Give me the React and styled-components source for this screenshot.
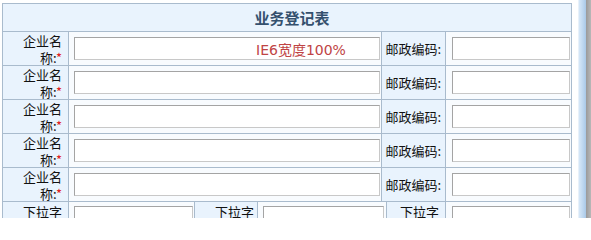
import styled, { createGlobalStyle } from 'styled-components';

const GlobalStyle = createGlobalStyle`
  html, body {
    margin: 0;
    padding: 0;
    background: #ffffff;
    font-family: "Noto Sans CJK SC", "Noto Sans", sans-serif;
  }
`;

const Page = styled.div`
  display: flex;
  width: 591px;
  height: 218px;
  overflow: hidden;
  background: #ffffff;
`;

const Frame = styled.div`
  flex: none;
  width: 570px;
  padding: 3px 0 0 2px;
`;

const Gutter = styled.div`
  flex: none;
  width: 6px;
`;

const ScrollStrip = styled.div`
  flex: none;
  width: 7px;
  background: linear-gradient(to right, #d6e7f7, #bcd6ef 60%, #a9c8e6);
  border-left: 1px solid #e8f1fa;
`;

const ScrollEdge = styled.div`
  flex: 1;
  background: linear-gradient(to right, #9a9a9a, #b8b8b8);
`;

const Table = styled.div`
  border-top: 1px solid #a9bbcd;
  border-left: 1px solid #a9bbcd;
  width: 569px;
`;

const Caption = styled.div`
  height: 27px;
  display: flex;
  align-items: center;
  justify-content: center;
  padding-left: 10px;
  background: #e9f3fd;
  border-right: 1px solid #a9bbcd;
  border-bottom: 1px solid #a9bbcd;
  color: #34506e;
  font-size: 15px;
  font-weight: bold;
`;

const Row = styled.div`
  display: grid;
  grid-template-columns: ${p => p.$cols};
  height: ${p => p.$height || 33}px;
  border-bottom: 1px solid #a9bbcd;
`;

const Label = styled.div`
  display: flex;
  align-items: ${p => (p.$top ? 'flex-start' : 'center')};
  justify-content: flex-end;
  text-align: right;
  padding-top: ${p => (p.$top ? 2 : 0)}px;
  padding-right: ${p => p.$pad || 6}px;
  background: #e9f3fd;
  border-right: 1px solid #a9bbcd;
  color: #111111;
  font-size: 13px;
  line-height: ${p => (p.$top ? 15 : 17)}px;
  overflow: hidden;
`;

const LabelText = styled.span`
  display: block;
  max-width: ${p => p.$max || 52}px;
`;

const Star = styled.span`
  color: #e02020;
`;

const Field = styled.div`
  display: flex;
  align-items: flex-start;
  padding: ${p => p.$top || 5}px ${p => p.$right || 1}px 0 ${p => p.$left || 5}px;
  background: #f8fbfe;
  border-right: 1px solid #a9bbcd;
  min-width: 0;
`;

const Input = styled.input`
  box-sizing: border-box;
  width: 100%;
  height: 23px;
  margin: 0;
  padding: 0 0 0 ${p => p.$indent || 3}px;
  border: 1px solid #a4a4a4;
  border-right-color: #c8c8c8;
  border-bottom-color: #c8c8c8;
  background: #ffffff;
  color: #c04444;
  font-family: "DejaVu Sans", "Noto Sans CJK SC", sans-serif;
  font-size: 14px;
  outline: none;
`;

const mainCols = '66px 313px 64px 126px';
const lastCols = '66px 126px 63px 129px 59px 126px';

const rows = [
  { note: 'IE6宽度100%' },
  {},
  {},
  {},
  {},
];

export default function App() {
  return (
    <Page>
      <GlobalStyle />
      <Frame>
        <Table>
          <Caption>业务登记表</Caption>
          {rows.map((r, i) => (
            <Row key={i} $cols={mainCols}>
              <Label>
                <LabelText>企业名称:<Star>*</Star></LabelText>
              </Label>
              <Field>
                <Input
                  readOnly
                  value={r.note || ''}
                  $indent={r.note ? 181 : 3}
                />
              </Field>
              <Label $pad={4}>邮政编码:</Label>
              <Field $left={6} $right={0}>
                <Input readOnly value="" />
              </Field>
            </Row>
          ))}
          <Row $cols={lastCols} $height={33}>
            <Label $top>
              <LabelText>下拉字</LabelText>
            </Label>
            <Field $left={5} $right={0} $top={4}>
              <Input readOnly value="" />
            </Field>
            <Label $top $pad={3}>下拉字</Label>
            <Field $left={5} $right={2} $top={4}>
              <Input readOnly value="" />
            </Field>
            <Label $top $pad={6}>下拉字</Label>
            <Field $left={6} $right={0} $top={4}>
              <Input readOnly value="" />
            </Field>
          </Row>
        </Table>
      </Frame>
      <Gutter />
      <ScrollStrip />
      <ScrollEdge />
    </Page>
  );
}
